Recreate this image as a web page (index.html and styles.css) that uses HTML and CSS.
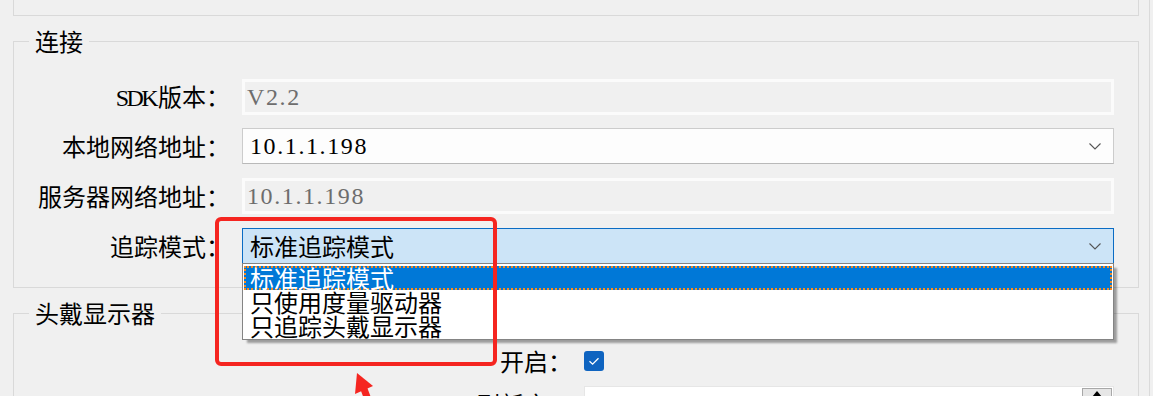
FILE: index.html
```html
<!DOCTYPE html>
<html lang="zh-CN">
<head>
<meta charset="utf-8">
<title>设置</title>
<link rel="stylesheet" href="styles.css">
</head>
<body>
<div class="page">
  <div class="group-top"></div>

  <fieldset class="group conn">
    <legend>连接</legend>
    <div class="row">
      <label class="lbl"><span class="latin">SDK</span>版本：</label>
      <div class="field disabled"><span class="mono">V2.2</span></div>
    </div>
    <div class="row">
      <label class="lbl">本地网络地址：</label>
      <div class="combo">
        <span class="mono">10.1.1.198</span>
        <svg class="chev" width="12" height="7" viewBox="0 0 12 7"><path d="M0.5 0.5 L6 6 L11.5 0.5" fill="none" stroke="#555" stroke-width="1.1"/></svg>
      </div>
    </div>
    <div class="row">
      <label class="lbl">服务器网络地址：</label>
      <div class="field disabled"><span class="mono">10.1.1.198</span></div>
    </div>
    <div class="row">
      <label class="lbl">追踪模式：</label>
      <div class="combo open">
        <span class="cjk">标准追踪模式</span>
        <svg class="chev" width="12" height="7" viewBox="0 0 12 7"><path d="M0.5 0.5 L6 6 L11.5 0.5" fill="none" stroke="#555" stroke-width="1.1"/></svg>
        <ul class="dropdown">
          <li class="item selected">标准追踪模式</li>
          <li class="item">只使用度量驱动器</li>
          <li class="item">只追踪头戴显示器</li>
        </ul>
      </div>
    </div>
  </fieldset>

  <fieldset class="group hmd">
    <legend>头戴显示器</legend>
    <div class="row">
      <label class="lbl">开启：</label>
      <div class="checkbox">
        <svg width="20" height="20" viewBox="0 0 20 20"><path d="M5.5 10.2 L8.6 13.2 L14.5 7.2" fill="none" stroke="#fff" stroke-width="1.3"/></svg>
      </div>
    </div>
    <div class="row">
      <label class="lbl">刷新率：</label>
      <div class="spin-field">
        <div class="spin-btn"><span class="tri"></span></div>
      </div>
    </div>
  </fieldset>

  <div class="annot-box"></div>
  <svg class="annot-arrow" width="50" height="31" viewBox="0 0 50 31">
    <polygon points="17,8 33,21 15,29" fill="#f52520"/>
    <line x1="24" y1="24" x2="30" y2="40" stroke="#f52520" stroke-width="7"/>
  </svg>
</div>
</body>
</html>
```

FILE: styles.css
```css
* {
  box-sizing: border-box;
}

html, body {
  margin: 0;
  height: 396px;
  overflow: hidden;
  background: #f0f0f0;
}

.page {
  position: relative;
  width: 1150px;
  height: 396px;
  border-right: 1px solid #dadada;
  font-family: "Noto Sans CJK SC", sans-serif;
  color: #000;
}

.group-top {
  margin-left: 13px;
  width: 1126px;
  height: 16px;
  border: 1px solid #d9d9d9;
  border-top: none;
}

.group {
  margin: 13px 0 0 13px;
  width: 1126px;
  min-width: 0;
  padding: 25px 0 23px 0;
  border: 1px solid #d9d9d9;
}

.group legend {
  margin-left: 15px;
  padding: 0 6px;
  font-size: 24px;
  line-height: 24px;
}

.hmd {
  padding-top: 18px;
}

.row {
  display: grid;
  grid-template-columns: 216px 872px;
  column-gap: 12px;
  align-items: center;
  height: 36px;
}

.row + .row {
  margin-top: 14px;
}

.hmd .row {
  grid-template-columns: 558px 530px;
}

.hmd .row + .row {
  margin-top: 7px;
}

.lbl {
  text-align: right;
  font-size: 24px;
  line-height: 36px;
  white-space: nowrap;
}

.latin {
  font-family: "Liberation Serif", serif;
  font-size: 24px;
  letter-spacing: -2.6px;
  margin-right: 2px;
}

.mono {
  font-family: "Liberation Serif", serif;
  font-size: 24px;
  letter-spacing: 1.6px;
  line-height: 30px;
}

.cjk {
  font-size: 24px;
  line-height: 30px;
}

.field {
  height: 36px;
  display: flex;
  align-items: center;
}

.field.disabled {
  background: #f0f0f0;
  border: 3px solid #fbfbfb;
  padding-left: 2px;
  color: #6d6d6d;
}

.combo {
  position: relative;
  height: 36px;
  display: flex;
  align-items: center;
  justify-content: space-between;
  padding: 0 12px 0 7px;
  background: #fdfdfd;
  border: 1px solid #cccccc;
  border-bottom-color: #b9b9b9;
}

.combo.open {
  background: #cce4f7;
  border-color: #0a6cc4;
  z-index: 2;
}

.chev {
  display: block;
  margin-top: 1px;
}

.dropdown {
  position: absolute;
  left: -1px;
  top: 100%;
  width: 872px;
  margin: 0;
  padding: 2px 1px 1px 1px;
  list-style: none;
  background: #fff;
  border: 1px solid #848484;
  box-shadow: 4px 4px 2px -1px rgba(0, 0, 0, 0.35);
}

.item {
  height: 24px;
  line-height: 24px;
  font-size: 24px;
  padding-left: 6px;
  white-space: nowrap;
}

.item.selected {
  background: #0078d7;
  color: #fff;
  border: 2px dotted #f98a1f;
  padding-left: 4px;
  line-height: 20px;
}

.checkbox {
  justify-self: start;
  width: 20px;
  height: 20px;
  border-radius: 3px;
  background: #0f64c0;
}

.checkbox svg {
  display: block;
}

.spin-field {
  height: 36px;
  background: #fff;
  border: 1px solid #e6e6e6;
  display: flex;
  justify-content: flex-end;
  align-items: flex-start;
  padding: 1px 1px 0 0;
}

.spin-btn {
  width: 30px;
  height: 18px;
  background: #e6e6e6;
  border: 1px solid #a8a8a8;
  display: flex;
  justify-content: center;
  padding-top: 2px;
}

.tri {
  width: 0;
  height: 0;
  border-left: 5px solid transparent;
  border-right: 5px solid transparent;
  border-bottom: 6px solid #000;
}

.annot-box {
  position: absolute;
  left: 215px;
  top: 217px;
  width: 282px;
  height: 149px;
  border: 4px solid #f52520;
  border-radius: 6px;
  z-index: 5;
}

.annot-arrow {
  position: absolute;
  left: 340px;
  top: 365px;
  z-index: 5;
  overflow: hidden;
}
```
